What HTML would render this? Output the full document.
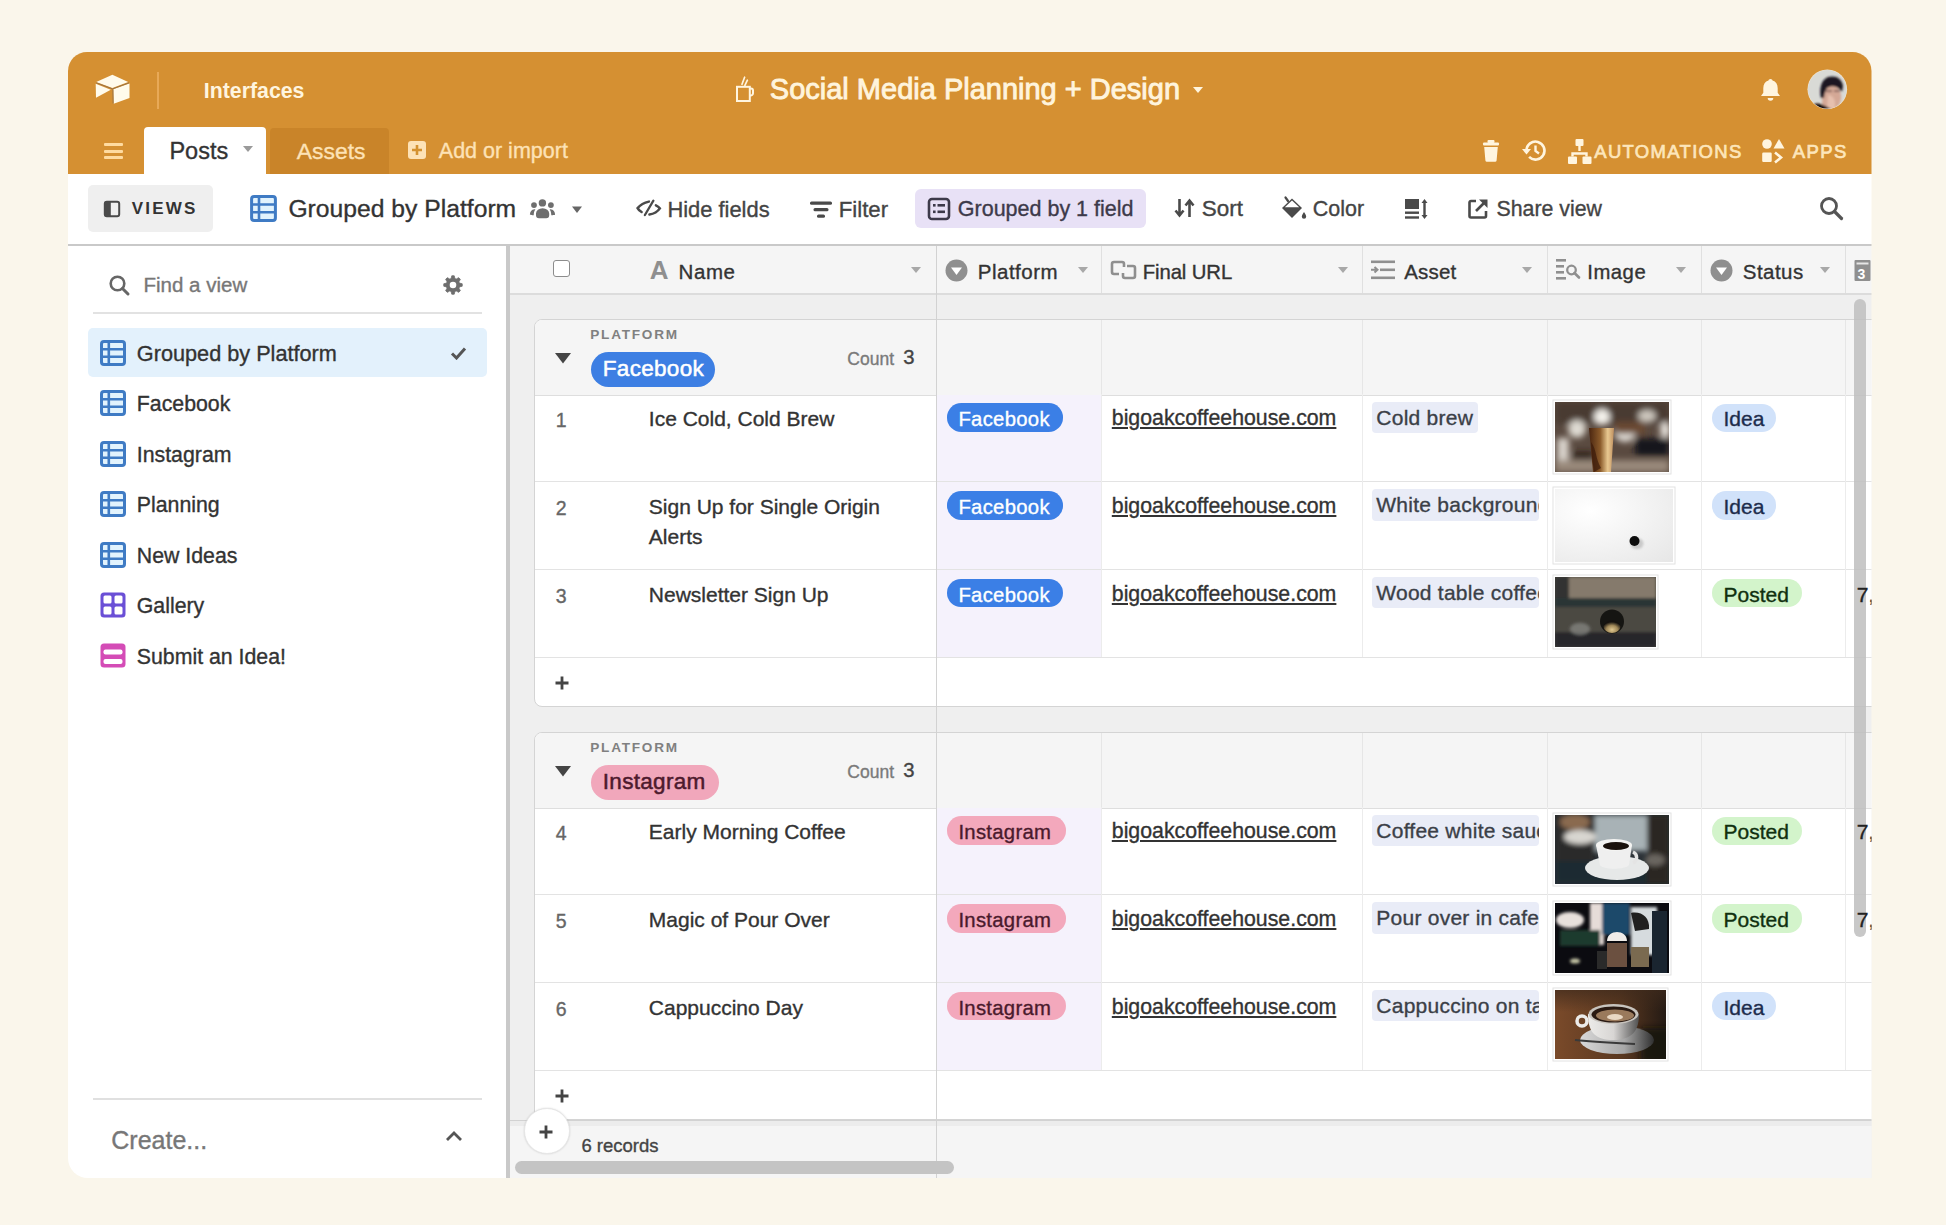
<!DOCTYPE html>
<html><head><meta charset="utf-8"><style>
html,body{margin:0;padding:0;width:1946px;height:1225px;overflow:hidden;background:#faf6eb;}
#win{position:absolute;left:0;top:0;width:1946px;height:1225px;clip-path:inset(52px 74.5px 47px 68px round 19px 19px 0 20px);}
.t{position:absolute;white-space:nowrap;line-height:1;font-family:"Liberation Sans",sans-serif;-webkit-text-stroke:0.35px currentColor;}
.r{position:absolute;display:block;}
</style></head><body><div id="win">
<div class="r" style="left:68.0px;top:52.0px;width:1806.0px;height:122.0px;background:#d59032;"></div>
<svg class="r" style="left:92.0px;top:72.0px;" width="40" height="34" viewBox="0 0 40 34">
      <polygon points="4.2,9.9 20.4,2.8 36.2,9.9 20.4,16" fill="#fffbec"/>
      <polygon points="3.7,11.8 18.8,17.8 4,25.7" fill="#fffbec"/>
      <polygon points="21.3,17.2 37.5,11.4 37.5,26 21.7,31.7" fill="#fffbec"/>
      <path d="M4.2 10.8 L20.5 16.9 L37 10.8 M20.9 17.2 L21.1 31.5" fill="none" stroke="#9c7444" stroke-width="1"/>
    </svg>
<div class="r" style="left:157.0px;top:72.0px;width:2.0px;height:37.0px;background:#e8a957;"></div>
<div class="t" style="left:203.8px;top:80.9px;font-size:21.3px;color:#fff5df;font-weight:bold;-webkit-text-stroke:0">Interfaces</div>
<svg class="r" style="left:734.0px;top:76.0px;" width="24" height="28" viewBox="0 0 24 28">
      <rect x="3" y="10.8" width="12.8" height="14.2" fill="none" stroke="#fff5df" stroke-width="2"/>
      <path d="M15.8 12.6 h1.2 a2 2 0 0 1 2 2 v2.6 a2.4 2.4 0 0 1 -2.4 2.4 h-0.8" fill="none" stroke="#fff5df" stroke-width="2"/>
      <path d="M8 8.3 L10.6 1.2 M10.9 9.4 L13.4 4.2" fill="none" stroke="#fff5df" stroke-width="1.7" stroke-linecap="round"/>
    </svg>
<div class="t" style="left:769.8px;top:75.2px;font-size:29px;color:#fff4dc;font-weight:normal;-webkit-text-stroke:0.9px currentColor">Social Media Planning + Design</div>
<svg class="r" style="left:1192.0px;top:86.0px;" width="12" height="8" viewBox="0 0 12 8"><polygon points="1,1 11,1 6,7" fill="#fff5df"/></svg>
<svg class="r" style="left:1758.0px;top:77.0px;" width="25" height="26" viewBox="0 0 25 26">
      <path d="M12.5 2 c1.2 0 2 .8 2 1.6 c3.5 1 5.2 3.8 5.2 7.6 v4.5 l2.3 3.3 h-19 l2.3 -3.3 v-4.5 c0 -3.8 1.7 -6.6 5.2 -7.6 c0 -.8 .8 -1.6 2 -1.6z" fill="#fff5df"/>
      <path d="M9.7 21 h5.6 a2.8 2.8 0 0 1 -5.6 0z" fill="#fff5df"/>
    </svg>
<svg class="r" style="left:1807.0px;top:69.0px;" width="41" height="41" viewBox="0 0 41 41">
      <defs><clipPath id="av"><circle cx="20.3" cy="20.3" r="19.3"/></clipPath>
      <filter id="avb" x="-20%" y="-20%" width="140%" height="140%"><feGaussianBlur stdDeviation="0.9"/></filter></defs>
      <circle cx="20.3" cy="20.3" r="19.8" fill="#f3e6cf"/>
      <g clip-path="url(#av)">
        <rect width="41" height="41" fill="#d9dad6"/>
        <g filter="url(#avb)">
        <path d="M20 16 C26 15 33 18 34 26 C35 34 30 40 24 41 L16 41 C14 34 15 22 20 16 Z" fill="#d4a896"/>
        <path d="M21 26 C24 26 27 28 28 33 L28 41 L20 41 Z" fill="#e6c0ae"/>
        <path d="M14 29 C12 20 14 11 21 8 C28 6 35 9 36 17 L35 23 C31 17 25 16 20 19 C18 22 17 26 17 29 Z" fill="#1a1520"/>
        <path d="M19 22 h6 M27 22 h6" stroke="#4a3030" stroke-width="1.2"/>
        <path d="M3 38 C8 33 13 34 18 37 C22 39 26 41 28 44 L3 44 Z" fill="#15110f"/>
        </g>
      </g>
    </svg>
<div class="r" style="left:104.0px;top:143.0px;width:19.0px;height:3.0px;background:#ffdba0;border-radius:1px"></div>
<div class="r" style="left:104.0px;top:149.5px;width:19.0px;height:3.0px;background:#ffdba0;border-radius:1px"></div>
<div class="r" style="left:104.0px;top:156.0px;width:19.0px;height:3.0px;background:#ffdba0;border-radius:1px"></div>
<div class="r" style="left:144.0px;top:127.0px;width:122.0px;height:48.0px;background:#fff;border-radius:4px 4px 0 0"></div>
<div class="t" style="left:169.4px;top:140.3px;font-size:23.5px;color:#333;font-weight:normal;">Posts</div>
<svg class="r" style="left:242.0px;top:145.0px;" width="12" height="9" viewBox="0 0 12 9"><polygon points="1,1 11,1 6,7" fill="#9a9a9a"/></svg>
<div class="r" style="left:270.0px;top:128.0px;width:119.0px;height:46.0px;background:#c98429;border-radius:4px 4px 0 0"></div>
<div class="t" style="left:296.8px;top:140.0px;font-size:22.9px;color:#fde2b6;font-weight:normal;">Assets</div>
<svg class="r" style="left:407.0px;top:140.0px;" width="20" height="20" viewBox="0 0 20 20">
      <rect x="1" y="1" width="18" height="18" rx="3" fill="#fde2b6"/>
      <path d="M10 5 v10 M5 10 h10" stroke="#d4912f" stroke-width="2.6"/>
    </svg>
<div class="t" style="left:438.8px;top:140.6px;font-size:21.5px;color:#fde2b6;font-weight:normal;">Add or import</div>
<svg class="r" style="left:1481.0px;top:139.0px;" width="20" height="24" viewBox="0 0 20 24">
      <rect x="2" y="3.5" width="16" height="3" rx="1" fill="#fff5df"/>
      <rect x="6.5" y="1" width="7" height="3" rx="1" fill="#fff5df"/>
      <path d="M3.2 8 h13.6 l-1.2 13.5 a1.5 1.5 0 0 1 -1.5 1.3 h-8.2 a1.5 1.5 0 0 1 -1.5 -1.3z" fill="#fff5df"/>
    </svg>
<svg class="r" style="left:1521.0px;top:138.0px;" width="27" height="25" viewBox="0 0 27 25">
      <path d="M5.5 12.5 a9 9 0 1 1 2.6 6.4" fill="none" stroke="#fff5df" stroke-width="2.6"/>
      <polygon points="1,11 10,11 5.5,16.5" fill="#fff5df"/>
      <path d="M14.5 7.5 v5.5 l3.5 2.5" fill="none" stroke="#fff5df" stroke-width="2.4"/>
    </svg>
<svg class="r" style="left:1567.0px;top:138.0px;" width="26" height="27" viewBox="0 0 26 27">
      <rect x="8.5" y="1" width="8" height="7" rx="1" fill="#fff5df"/>
      <rect x="1" y="18.5" width="9" height="7.5" rx="1" fill="#fff5df"/>
      <rect x="15.5" y="18.5" width="9" height="7.5" rx="1" fill="#fff5df"/>
      <path d="M12.5 8 v5 M5.5 18.5 v-3 h14 v3" fill="none" stroke="#fff5df" stroke-width="2.4"/>
    </svg>
<div class="t" style="left:1594.3px;top:142.6px;font-size:18.5px;color:#fde6bb;font-weight:normal;letter-spacing:1.3px;-webkit-text-stroke:0.7px currentColor">AUTOMATIONS</div>
<svg class="r" style="left:1761.0px;top:138.0px;" width="26" height="26" viewBox="0 0 26 26">
      <circle cx="6" cy="6" r="4.8" fill="#fff5df"/>
      <polygon points="18,1 23.5,10.5 12.5,10.5" fill="#fff5df"/>
      <rect x="1.2" y="14.5" width="9.5" height="9.5" rx="1.2" fill="#fff5df"/>
      <path d="M14 14.5 l6 5 l-6 5" fill="none" stroke="#fff5df" stroke-width="2.6"/>
    </svg>
<div class="t" style="left:1792.8px;top:142.6px;font-size:18.5px;color:#fde6bb;font-weight:normal;letter-spacing:1.4px;-webkit-text-stroke:0.7px currentColor">APPS</div>
<div class="r" style="left:68.0px;top:174.0px;width:1806.0px;height:70.0px;background:#fff;"></div>
<div class="r" style="left:68.0px;top:243.5px;width:1806.0px;height:2.5px;background:#c9c9c9;"></div>
<div class="r" style="left:88.0px;top:185.0px;width:125.0px;height:47.0px;background:#efefef;border-radius:5px"></div>
<svg class="r" style="left:103.0px;top:200.0px;" width="18" height="18" viewBox="0 0 18 18">
      <rect x="1.8" y="1.8" width="14.4" height="14.4" rx="2" fill="none" stroke="#4a4a4a" stroke-width="2"/>
      <rect x="1.8" y="1.8" width="6" height="14.4" fill="#4a4a4a"/>
    </svg>
<div class="t" style="left:131.8px;top:199.8px;font-size:17px;color:#333;font-weight:bold;letter-spacing:2.2px;-webkit-text-stroke:0">VIEWS</div>
<svg class="r" style="left:250.0px;top:195.0px;" width="27" height="27" viewBox="0 0 27 27">
      <rect x="1.6" y="1.6" width="23.8" height="23.8" rx="2.5" fill="#e2f3fd" stroke="#3f7bc4" stroke-width="3"/>
      <path d="M1.6 9.5 h23.8 M1.6 17.3 h23.8 M9 1.6 v23.8" stroke="#3f7bc4" stroke-width="2.6"/>
    </svg>
<div class="t" style="left:288.4px;top:197.1px;font-size:24.7px;color:#333;font-weight:normal;">Grouped by Platform</div>
<svg class="r" style="left:529.0px;top:198.0px;" width="28" height="22" viewBox="0 0 28 22">
      <g fill="#6e6e6e">
      <circle cx="13.4" cy="4.9" r="3.7"/>
      <circle cx="5" cy="7.1" r="2.9"/>
      <circle cx="21.9" cy="7.1" r="2.9"/>
      <path d="M7 15.5 a6.6 5.2 0 0 1 13.2 0 v1.8 a3 3 0 0 1 -3 3 h-7.2 a3 3 0 0 1 -3 -3z"/>
      <path d="M0.9 16.8 c0 -3 1.6 -5.3 4.6 -5.5 c0.3 0 0.6 0 0.9 .1 c-1.1 1.2 -1.6 3 -1.7 5.9 c-1.6 0 -3 -.2 -3.8 -.5z"/>
      <path d="M26.1 16.8 c0 -3 -1.6 -5.3 -4.6 -5.5 c-0.3 0 -0.6 0 -0.9 .1 c1.1 1.2 1.6 3 1.7 5.9 c1.6 0 3 -.2 3.8 -.5z"/>
      </g>
    </svg>
<svg class="r" style="left:571.0px;top:205.0px;" width="12" height="10" viewBox="0 0 12 10"><polygon points="1,1.5 11,1.5 6,8" fill="#666"/></svg>
<svg class="r" style="left:636.0px;top:198.0px;" width="26" height="20" viewBox="0 0 26 20">
      <path d="M12.9 3.6 C8.5 4.6 3.8 7.5 1.6 10.1 C2.3 11.6 4 13 5.6 14" fill="none" stroke="#4a4a4a" stroke-width="2.5" stroke-linecap="round"/>
      <path d="M17.4 2.7 L8.9 17" stroke="#4a4a4a" stroke-width="2.3" stroke-linecap="round"/>
      <path d="M19.9 7.3 C21.8 8.2 23.2 9.3 23.9 10.4 C21.8 13.4 17.6 15.9 13.4 16.6" fill="none" stroke="#4a4a4a" stroke-width="2.5" stroke-linecap="round"/>
    </svg>
<div class="t" style="left:667.4px;top:198.5px;font-size:21.9px;color:#444;font-weight:normal;">Hide fields</div>
<svg class="r" style="left:809.0px;top:200.0px;" width="24" height="20" viewBox="0 0 24 20">
      <rect x="1" y="1.5" width="22" height="3.2" rx="1.5" fill="#4a4a4a"/>
      <rect x="4.5" y="8" width="15" height="3.2" rx="1.5" fill="#4a4a4a"/>
      <rect x="8" y="14.5" width="8" height="3.2" rx="1.5" fill="#4a4a4a"/>
    </svg>
<div class="t" style="left:838.8px;top:198.5px;font-size:22.2px;color:#444;font-weight:normal;">Filter</div>
<div class="r" style="left:914.5px;top:189.0px;width:231.5px;height:39.0px;background:#e8e1f6;border-radius:6px"></div>
<svg class="r" style="left:927.0px;top:196.5px;" width="24" height="24" viewBox="0 0 24 24">
      <rect x="2" y="2" width="20" height="20" rx="3" fill="none" stroke="#3d3a4a" stroke-width="2.6"/>
      <rect x="6" y="7" width="2.6" height="2.6" fill="#3d3a4a"/>
      <rect x="6" y="13.5" width="2.6" height="2.6" fill="#3d3a4a"/>
      <rect x="10.5" y="7" width="7.5" height="2.6" fill="#3d3a4a"/>
      <rect x="10.5" y="13.5" width="7.5" height="2.6" fill="#3d3a4a"/>
    </svg>
<div class="t" style="left:957.8px;top:198.6px;font-size:21.5px;color:#3d3a4a;font-weight:normal;">Grouped by 1 field</div>
<svg class="r" style="left:1174.0px;top:197.0px;" width="22" height="22" viewBox="0 0 22 22">
      <path d="M5.5 2 v16 M1.5 13.5 l4 5 l4 -5" fill="none" stroke="#4a4a4a" stroke-width="2.6"/>
      <path d="M15.5 20 v-16 M11.5 8.5 l4 -5 l4 5" fill="none" stroke="#4a4a4a" stroke-width="2.6"/>
    </svg>
<div class="t" style="left:1201.8px;top:198.4px;font-size:22.5px;color:#444;font-weight:normal;">Sort</div>
<svg class="r" style="left:1280.0px;top:195.0px;" width="28" height="26" viewBox="0 0 28 26">
      <path d="M2 13 L12 3.5 L22 13 L12 23 z" fill="#4a4a4a"/>
      <path d="M4.8 12.2 L12 5.5 L19.2 12.2 z" fill="#fff"/>
      <path d="M8 6 L5.5 2.5" stroke="#4a4a4a" stroke-width="2.2" stroke-linecap="round"/>
      <path d="M24 17 c-1.5 2.3 -2.2 3.6 -2.2 4.5 a2.2 2.2 0 0 0 4.4 0 c0 -.9 -.7 -2.2 -2.2 -4.5z" fill="#4a4a4a"/>
    </svg>
<div class="t" style="left:1312.8px;top:198.6px;font-size:21.5px;color:#444;font-weight:normal;">Color</div>
<svg class="r" style="left:1404.0px;top:198.0px;" width="25" height="22" viewBox="0 0 25 22">
      <rect x="1" y="1" width="14" height="10" fill="#4a4a4a"/>
      <rect x="1" y="13.5" width="14" height="2.4" fill="#4a4a4a"/>
      <rect x="1" y="18.3" width="14" height="2.4" fill="#4a4a4a"/>
      <path d="M20.5 3 v16" stroke="#4a4a4a" stroke-width="2.4"/>
      <path d="M17.5 5 l3 -4 l3 4 z M17.5 17 l3 4 l3 -4 z" fill="#4a4a4a"/>
    </svg>
<svg class="r" style="left:1468.0px;top:198.0px;" width="22" height="21" viewBox="0 0 22 21">
      <path d="M8 3 H3 a1.5 1.5 0 0 0 -1.5 1.5 v13.5 a1.5 1.5 0 0 0 1.5 1.5 h13.5 a1.5 1.5 0 0 0 1.5 -1.5 v-5" fill="none" stroke="#4a4a4a" stroke-width="2.6"/>
      <path d="M8 13 L17 4" stroke="#4a4a4a" stroke-width="2.6"/>
      <path d="M11 1.5 h8.5 v8.5 z" fill="#4a4a4a"/>
    </svg>
<div class="t" style="left:1496.5px;top:198.6px;font-size:21.3px;color:#444;font-weight:normal;">Share view</div>
<svg class="r" style="left:1819.0px;top:196.0px;" width="26" height="26" viewBox="0 0 26 26">
      <circle cx="10" cy="10" r="7.5" fill="none" stroke="#555" stroke-width="2.8"/>
      <path d="M15.5 15.5 L22.5 22.5" stroke="#555" stroke-width="3.2" stroke-linecap="round"/>
    </svg>
<div class="r" style="left:68.0px;top:246.0px;width:438.0px;height:932.0px;background:#fff;"></div>
<div class="r" style="left:506.0px;top:246.0px;width:4.0px;height:932.0px;background:#c9c9c9;"></div>
<svg class="r" style="left:108.0px;top:274.0px;" width="24" height="24" viewBox="0 0 24 24">
      <circle cx="9.5" cy="9.5" r="6.8" fill="none" stroke="#666" stroke-width="2.6"/>
      <path d="M14.5 14.5 L20 20" stroke="#666" stroke-width="3" stroke-linecap="round"/>
    </svg>
<div class="t" style="left:143.5px;top:275.3px;font-size:20.5px;color:#777;font-weight:normal;">Find a view</div>
<svg class="r" style="left:442.0px;top:274.0px;" width="22" height="22" viewBox="0 0 22 22">
      <polygon points="9.05,4.69 9.79,1.78 12.21,1.78 12.95,4.69 14.08,5.16 16.67,3.63 18.37,5.33 16.84,7.92 17.31,9.05 20.22,9.79 20.22,12.21 17.31,12.95 16.84,14.08 18.37,16.67 16.67,18.37 14.08,16.84 12.95,17.31 12.21,20.22 9.79,20.22 9.05,17.31 7.92,16.84 5.33,18.37 3.63,16.67 5.16,14.08 4.69,12.95 1.78,12.21 1.78,9.79 4.69,9.05 5.16,7.92 3.63,5.33 5.33,3.63 7.92,5.16" fill="#6e6e6e" stroke="#6e6e6e" stroke-width="0.8" stroke-linejoin="round"/>
      <circle cx="11" cy="11" r="6.8" fill="#6e6e6e"/>
      <circle cx="11" cy="11" r="3.3" fill="#fff"/>
    </svg>
<div class="r" style="left:93.0px;top:312.0px;width:389.0px;height:2.0px;background:#e2e2e2;"></div>
<div class="r" style="left:88.0px;top:328.0px;width:399.0px;height:48.5px;background:#e3f1fc;border-radius:5px"></div>
<svg class="r" style="left:99.5px;top:339.5px;" width="26" height="26" viewBox="0 0 26 26">
      <rect x="1.5" y="1.5" width="23" height="23" rx="2.5" fill="#e2f3fd" stroke="#3f7bc4" stroke-width="3"/>
      <path d="M1.5 9.3 h23 M1.5 16.7 h23 M8.8 1.5 v23" stroke="#3f7bc4" stroke-width="2.6"/>
    </svg>
<div class="t" style="left:136.8px;top:342.9px;font-size:21.7px;color:#333;font-weight:normal;">Grouped by Platform</div>
<svg class="r" style="left:99.5px;top:390.0px;" width="26" height="26" viewBox="0 0 26 26">
      <rect x="1.5" y="1.5" width="23" height="23" rx="2.5" fill="#e2f3fd" stroke="#3f7bc4" stroke-width="3"/>
      <path d="M1.5 9.3 h23 M1.5 16.7 h23 M8.8 1.5 v23" stroke="#3f7bc4" stroke-width="2.6"/>
    </svg>
<div class="t" style="left:136.8px;top:394.3px;font-size:21.3px;color:#333;font-weight:normal;">Facebook</div>
<svg class="r" style="left:99.5px;top:440.5px;" width="26" height="26" viewBox="0 0 26 26">
      <rect x="1.5" y="1.5" width="23" height="23" rx="2.5" fill="#e2f3fd" stroke="#3f7bc4" stroke-width="3"/>
      <path d="M1.5 9.3 h23 M1.5 16.7 h23 M8.8 1.5 v23" stroke="#3f7bc4" stroke-width="2.6"/>
    </svg>
<div class="t" style="left:136.8px;top:444.8px;font-size:21.3px;color:#333;font-weight:normal;">Instagram</div>
<svg class="r" style="left:99.5px;top:491.0px;" width="26" height="26" viewBox="0 0 26 26">
      <rect x="1.5" y="1.5" width="23" height="23" rx="2.5" fill="#e2f3fd" stroke="#3f7bc4" stroke-width="3"/>
      <path d="M1.5 9.3 h23 M1.5 16.7 h23 M8.8 1.5 v23" stroke="#3f7bc4" stroke-width="2.6"/>
    </svg>
<div class="t" style="left:136.8px;top:495.3px;font-size:21.3px;color:#333;font-weight:normal;">Planning</div>
<svg class="r" style="left:99.5px;top:541.5px;" width="26" height="26" viewBox="0 0 26 26">
      <rect x="1.5" y="1.5" width="23" height="23" rx="2.5" fill="#e2f3fd" stroke="#3f7bc4" stroke-width="3"/>
      <path d="M1.5 9.3 h23 M1.5 16.7 h23 M8.8 1.5 v23" stroke="#3f7bc4" stroke-width="2.6"/>
    </svg>
<div class="t" style="left:136.8px;top:545.8px;font-size:21.3px;color:#333;font-weight:normal;">New Ideas</div>
<svg class="r" style="left:99.5px;top:592.0px;" width="26" height="26" viewBox="0 0 26 26">
              <rect x="0.5" y="0.5" width="25" height="25" rx="3.5" fill="#6a4fd6"/>
              <rect x="3.5" y="3.5" width="8" height="8" rx="1.5" fill="#fff"/>
              <rect x="14.5" y="3.5" width="8" height="8" rx="1.5" fill="#fff"/>
              <rect x="3.5" y="14.5" width="8" height="8" rx="1.5" fill="#fff"/>
              <rect x="14.5" y="14.5" width="8" height="8" rx="1.5" fill="#fff"/>
            </svg>
<div class="t" style="left:136.8px;top:596.3px;font-size:21.3px;color:#333;font-weight:normal;">Gallery</div>
<svg class="r" style="left:99.5px;top:642.5px;" width="26" height="26" viewBox="0 0 26 26">
              <rect x="0.5" y="0.5" width="25" height="24" rx="3.5" fill="#d44cb6"/>
              <rect x="3.5" y="6.5" width="19" height="5" rx="2" fill="#fff"/>
              <rect x="3.5" y="16" width="19" height="5" rx="2" fill="#fff"/>
            </svg>
<div class="t" style="left:136.8px;top:646.8px;font-size:21.3px;color:#333;font-weight:normal;">Submit an Idea!</div>
<svg class="r" style="left:450.0px;top:346.0px;" width="17" height="14" viewBox="0 0 17 14"><path d="M2 7.5 L6.5 12 L15 2.5" fill="none" stroke="#555" stroke-width="3"/></svg>
<div class="r" style="left:93.0px;top:1097.5px;width:389.0px;height:2.0px;background:#e0e0e0;"></div>
<div class="t" style="left:111.3px;top:1127.5px;font-size:25px;color:#777;font-weight:normal;">Create...</div>
<svg class="r" style="left:444.0px;top:1129.0px;" width="20" height="15" viewBox="0 0 20 15"><path d="M3 11 L10 4 L17 11" fill="none" stroke="#555" stroke-width="2.8"/></svg>
<div class="r" style="left:510.0px;top:295.0px;width:1364.0px;height:883.0px;background:#efefef;"></div>
<div class="r" style="left:510.0px;top:246.0px;width:1364.0px;height:47.0px;background:#f5f5f5;"></div>
<div class="r" style="left:510.0px;top:293.0px;width:1364.0px;height:2.0px;background:#dcdcdc;"></div>
<div class="r" style="left:553.0px;top:260.0px;width:16.5px;height:16.5px;background:#fff;border:1.5px solid #8c8c8c;border-radius:3px;box-sizing:border-box"></div>
<div class="t" style="left:649.8px;top:256.9px;font-size:26px;color:#8f8f8f;font-weight:bold;-webkit-text-stroke:0">A</div>
<div class="t" style="left:678.5px;top:261.5px;font-size:20.5px;color:#333;font-weight:normal;letter-spacing:0.6px">Name</div>
<svg class="r" style="left:910.0px;top:266.0px;" width="12" height="8" viewBox="0 0 12 8"><polygon points="1,1 11,1 6,7" fill="#a8a8a8"/></svg>
<div class="r" style="left:936.0px;top:246.0px;width:1.0px;height:47.0px;background:#e0e0e0;"></div>
<div class="r" style="left:1101.0px;top:246.0px;width:1.0px;height:47.0px;background:#e0e0e0;"></div>
<div class="r" style="left:1362.0px;top:246.0px;width:1.0px;height:47.0px;background:#e0e0e0;"></div>
<div class="r" style="left:1547.0px;top:246.0px;width:1.0px;height:47.0px;background:#e0e0e0;"></div>
<div class="r" style="left:1701.0px;top:246.0px;width:1.0px;height:47.0px;background:#e0e0e0;"></div>
<div class="r" style="left:1845.0px;top:246.0px;width:1.0px;height:47.0px;background:#e0e0e0;"></div>
<svg class="r" style="left:945.0px;top:259.0px;" width="23" height="23" viewBox="0 0 23 23"><circle cx="11.5" cy="11.5" r="11" fill="#8f8f8f"/><polygon points="6,8.5 17,8.5 11.5,16" fill="#fff"/></svg>
<div class="t" style="left:977.8px;top:261.5px;font-size:20.5px;color:#333;font-weight:normal;letter-spacing:0.5px">Platform</div>
<svg class="r" style="left:1076.5px;top:266.0px;" width="12" height="8" viewBox="0 0 12 8"><polygon points="1,1 11,1 6,7" fill="#a8a8a8"/></svg>
<svg class="r" style="left:1110.0px;top:259.0px;" width="27" height="22" viewBox="0 0 27 22">
      <path d="M9 15 H4 a2 2 0 0 1 -2 -2 V5 a2 2 0 0 1 2 -2 h8 a2 2 0 0 1 2 2 v3" fill="none" stroke="#8f8f8f" stroke-width="2.6"/>
      <path d="M17 7 H23 a2 2 0 0 1 2 2 v8 a2 2 0 0 1 -2 2 h-8 a2 2 0 0 1 -2 -2 v-3" fill="none" stroke="#8f8f8f" stroke-width="2.6"/>
    </svg>
<div class="t" style="left:1142.8px;top:261.5px;font-size:20.3px;color:#333;font-weight:normal;letter-spacing:-0.1px">Final URL</div>
<svg class="r" style="left:1337.0px;top:266.0px;" width="12" height="8" viewBox="0 0 12 8"><polygon points="1,1 11,1 6,7" fill="#a8a8a8"/></svg>
<svg class="r" style="left:1370.0px;top:259.0px;" width="27" height="22" viewBox="0 0 27 22">
      <rect x="1" y="1.5" width="24" height="2.6" fill="#8f8f8f"/>
      <rect x="10" y="9.5" width="15" height="2.6" fill="#8f8f8f"/>
      <rect x="1" y="17.5" width="24" height="2.6" fill="#8f8f8f"/>
      <path d="M1 10.8 h6 M4.5 8 l3 2.8 l-3 2.8" fill="none" stroke="#8f8f8f" stroke-width="2"/>
    </svg>
<div class="t" style="left:1404.3px;top:261.5px;font-size:20.5px;color:#333;font-weight:normal;letter-spacing:0.15px">Asset</div>
<svg class="r" style="left:1521.0px;top:266.0px;" width="12" height="8" viewBox="0 0 12 8"><polygon points="1,1 11,1 6,7" fill="#a8a8a8"/></svg>
<svg class="r" style="left:1555.0px;top:258.0px;" width="26" height="24" viewBox="0 0 26 24">
      <rect x="1" y="1" width="10" height="2.6" fill="#8f8f8f"/>
      <rect x="1" y="7" width="8" height="2.6" fill="#8f8f8f"/>
      <rect x="1" y="13" width="8" height="2.6" fill="#8f8f8f"/>
      <rect x="1" y="19" width="10" height="2.6" fill="#8f8f8f"/>
      <circle cx="16.5" cy="12" r="4.3" fill="none" stroke="#8f8f8f" stroke-width="2.3"/>
      <path d="M19.5 15 L24 19.5" stroke="#8f8f8f" stroke-width="2.6" stroke-linecap="round"/>
    </svg>
<div class="t" style="left:1587.3px;top:261.5px;font-size:20.3px;color:#333;font-weight:normal;letter-spacing:0.5px">Image</div>
<svg class="r" style="left:1674.5px;top:266.0px;" width="12" height="8" viewBox="0 0 12 8"><polygon points="1,1 11,1 6,7" fill="#a8a8a8"/></svg>
<svg class="r" style="left:1710.0px;top:259.0px;" width="23" height="23" viewBox="0 0 23 23"><circle cx="11.5" cy="11.5" r="11" fill="#8f8f8f"/><polygon points="6,8.5 17,8.5 11.5,16" fill="#fff"/></svg>
<div class="t" style="left:1742.8px;top:261.5px;font-size:20.5px;color:#333;font-weight:normal;letter-spacing:0.45px">Status</div>
<svg class="r" style="left:1819.0px;top:266.0px;" width="12" height="8" viewBox="0 0 12 8"><polygon points="1,1 11,1 6,7" fill="#a8a8a8"/></svg>
<svg class="r" style="left:1853.0px;top:258.0px;" width="20" height="25" viewBox="0 0 20 25">
      <rect x="1.5" y="2" width="16" height="21" rx="1" fill="#8f8f8f"/>
      <rect x="3.5" y="4.5" width="12" height="2" fill="#e6e6e6"/>
      <text x="8.5" y="20.5" font-family="Liberation Sans" font-size="14" font-weight="bold" fill="#fff" text-anchor="middle">3</text>
    </svg>
<div class="r" style="left:534px;top:319px;width:1400px;height:388px;border:1px solid #d4d4d4;border-radius:8px;background:#fff;box-sizing:border-box;overflow:hidden"><div class="r" style="left:0;top:0;width:1400px;height:75px;background:#f5f5f5;border-bottom:1px solid #dedede"></div></div>
<div class="r" style="left:1101.0px;top:320.0px;width:1.0px;height:74.0px;background:#e6e6e6;"></div>
<div class="r" style="left:1362.0px;top:320.0px;width:1.0px;height:74.0px;background:#e6e6e6;"></div>
<div class="r" style="left:1547.0px;top:320.0px;width:1.0px;height:74.0px;background:#e6e6e6;"></div>
<div class="r" style="left:1701.0px;top:320.0px;width:1.0px;height:74.0px;background:#e6e6e6;"></div>
<div class="r" style="left:1845.0px;top:320.0px;width:1.0px;height:74.0px;background:#e6e6e6;"></div>
<div class="t" style="left:590.3px;top:328.0px;font-size:13.6px;color:#808080;font-weight:bold;letter-spacing:1.75px;-webkit-text-stroke:0">PLATFORM</div>
<svg class="r" style="left:554.0px;top:352.0px;" width="18" height="12" viewBox="0 0 18 12"><polygon points="1,1 17,1 9,11.5" fill="#444"/></svg>
<div class="r" style="left:590.5px;top:352.0px;width:124.5px;height:35.0px;background:#3d7fe3;border-radius:17.5px"></div>
<div class="t" style="left:602.8px;top:358.4px;font-size:22.5px;color:#fff;font-weight:normal;letter-spacing:0.3px;-webkit-text-stroke:0.5px currentColor">Facebook</div>
<div class="t" style="left:847.3px;top:350.7px;font-size:17.5px;color:#7a7a7a;font-weight:normal;">Count</div>
<div class="t" style="left:903.3px;top:347.3px;font-size:20.3px;color:#444;font-weight:normal;">3</div>
<div class="r" style="left:937.0px;top:394.5px;width:164.0px;height:87.2px;background:#f5f2fc;"></div>
<div class="r" style="left:535.0px;top:481.2px;width:1339.0px;height:1.0px;background:#e3e3e3;"></div>
<div class="t" style="left:555.8px;top:411.2px;font-size:19.5px;color:#666;font-weight:normal;">1</div>
<div class="t" style="left:648.8px;top:408.2px;font-size:21px;color:#333;font-weight:normal;">Ice Cold, Cold Brew</div>
<div class="r" style="left:947.0px;top:403.4px;width:116.0px;height:28.6px;background:#3b7fe6;border-radius:14.3px"></div>
<div class="t" style="left:958.4px;top:409.2px;font-size:20.3px;color:#fff;font-weight:normal;letter-spacing:0.3px">Facebook</div>
<div class="t" style="left:1111.8px;top:408.2px;font-size:21.3px;color:#333;font-weight:normal;text-decoration:underline;text-underline-offset:2px;text-decoration-thickness:1.5px">bigoakcoffeehouse.com</div>
<div class="r" style="left:1371.5px;top:401.7px;height:31.3px;background:#e9ecf7;border-radius:4px;overflow:hidden;width:106px"><div class="t" style="left:4.8px;top:5.1px;font-size:21px;color:#3b3f47;letter-spacing:0.25px">Cold brew</div></div>
<svg class="r" style="left:1555.0px;top:402.0px;box-shadow:0 0 0 1.5px #fff, 0 0 0 2.5px #e2e2e2" width="114" height="70" viewBox="0 0 114 70">
        <defs><filter id="b1" x="-30%" y="-30%" width="160%" height="160%"><feGaussianBlur stdDeviation="3"/></filter>
        <linearGradient id="g1" x1="0" x2="1"><stop offset="0" stop-color="#4a2510"/><stop offset=".45" stop-color="#8a5a2a"/><stop offset=".75" stop-color="#e8c890"/><stop offset="1" stop-color="#c09060"/></linearGradient></defs>
        <rect width="114" height="70" fill="#5a4a40"/>
        <g filter="url(#b1)">
          <rect x="0" y="0" width="114" height="22" fill="#4a3a30"/>
          <circle cx="47" cy="15" r="8" fill="#f4f2ec"/>
          <ellipse cx="22" cy="27" rx="9" ry="9" fill="#dedad2"/>
          <ellipse cx="70" cy="30" rx="11" ry="10" fill="#e4e0da"/>
          <ellipse cx="92" cy="14" rx="9" ry="6" fill="#cfc9c0"/>
          <ellipse cx="110" cy="28" rx="5" ry="8" fill="#e8e4de"/>
          <rect x="80" y="36" width="34" height="18" fill="#15131a"/>
          <rect x="60" y="20" width="30" height="12" fill="#6a4a30"/>
          <rect x="2" y="36" width="12" height="26" fill="#d8d2ca"/>
          <rect x="18" y="50" width="20" height="8" fill="#2a1e18"/>
          <rect x="0" y="58" width="114" height="12" fill="#9a8a7c"/>
        </g>
        <path d="M34 26 L59 26 L56 70 L38 70 Z" fill="url(#g1)"/>
        <path d="M36 40 C42 48 40 56 46 66 L39 70 L37 55 Z" fill="#3a1a0a" opacity=".7"/>
        </svg>
<div class="r" style="left:1712.0px;top:403.7px;width:64.0px;height:28.3px;background:#d1e2fa;border-radius:14px"></div>
<div class="t" style="left:1723.5px;top:408.3px;font-size:21px;color:#1d2c4c;font-weight:normal;">Idea</div>
<div class="r" style="left:937.0px;top:482.2px;width:164.0px;height:87.2px;background:#f5f2fc;"></div>
<div class="r" style="left:535.0px;top:568.8px;width:1339.0px;height:1.0px;background:#e3e3e3;"></div>
<div class="t" style="left:555.8px;top:498.9px;font-size:19.5px;color:#666;font-weight:normal;">2</div>
<div class="t" style="left:648.8px;top:495.8px;font-size:21px;color:#333;font-weight:normal;">Sign Up for Single Origin</div>
<div class="t" style="left:648.8px;top:526.3px;font-size:21px;color:#333;font-weight:normal;">Alerts</div>
<div class="r" style="left:947.0px;top:491.1px;width:116.0px;height:28.6px;background:#3b7fe6;border-radius:14.3px"></div>
<div class="t" style="left:958.4px;top:496.9px;font-size:20.3px;color:#fff;font-weight:normal;letter-spacing:0.3px">Facebook</div>
<div class="t" style="left:1111.8px;top:495.9px;font-size:21.3px;color:#333;font-weight:normal;text-decoration:underline;text-underline-offset:2px;text-decoration-thickness:1.5px">bigoakcoffeehouse.com</div>
<div class="r" style="left:1371.5px;top:489.4px;height:31.3px;background:#e9ecf7;border-radius:4px;overflow:hidden;width:167.5px"><div class="t" style="left:4.8px;top:5.1px;font-size:21px;color:#3b3f47;letter-spacing:0.25px">White background</div></div>
<svg class="r" style="left:1555.0px;top:488.7px;box-shadow:0 0 0 1.5px #fff, 0 0 0 2.5px #e2e2e2" width="118" height="73" viewBox="0 0 118 73">
        <defs><radialGradient id="g2" cx=".3" cy=".3" r="1"><stop offset="0" stop-color="#ffffff"/><stop offset="1" stop-color="#e6e6e6"/></radialGradient>
        <filter id="b2" x="-50%" y="-50%" width="200%" height="200%"><feGaussianBlur stdDeviation="1.2"/></filter></defs>
        <rect width="118" height="73" fill="url(#g2)"/>
        <ellipse cx="82" cy="54.5" rx="6.5" ry="5.5" fill="#b0b0b0" opacity=".6" filter="url(#b2)"/>
        <circle cx="79.5" cy="52" r="5" fill="#0d0d0d"/>
        </svg>
<div class="r" style="left:1712.0px;top:491.4px;width:64.0px;height:28.3px;background:#d1e2fa;border-radius:14px"></div>
<div class="t" style="left:1723.5px;top:495.9px;font-size:21px;color:#1d2c4c;font-weight:normal;">Idea</div>
<div class="r" style="left:937.0px;top:569.8px;width:164.0px;height:87.2px;background:#f5f2fc;"></div>
<div class="r" style="left:535.0px;top:656.5px;width:1339.0px;height:1.0px;background:#e3e3e3;"></div>
<div class="t" style="left:555.8px;top:586.5px;font-size:19.5px;color:#666;font-weight:normal;">3</div>
<div class="t" style="left:648.8px;top:583.5px;font-size:21px;color:#333;font-weight:normal;">Newsletter Sign Up</div>
<div class="r" style="left:947.0px;top:578.7px;width:116.0px;height:28.6px;background:#3b7fe6;border-radius:14.3px"></div>
<div class="t" style="left:958.4px;top:584.5px;font-size:20.3px;color:#fff;font-weight:normal;letter-spacing:0.3px">Facebook</div>
<div class="t" style="left:1111.8px;top:583.6px;font-size:21.3px;color:#333;font-weight:normal;text-decoration:underline;text-underline-offset:2px;text-decoration-thickness:1.5px">bigoakcoffeehouse.com</div>
<div class="r" style="left:1371.5px;top:577.0px;height:31.3px;background:#e9ecf7;border-radius:4px;overflow:hidden;width:167.5px"><div class="t" style="left:4.8px;top:5.1px;font-size:21px;color:#3b3f47;letter-spacing:0.25px">Wood table coffee</div></div>
<svg class="r" style="left:1555.0px;top:577.3px;box-shadow:0 0 0 1.5px #fff, 0 0 0 2.5px #e2e2e2" width="101" height="70" viewBox="0 0 101 70">
        <defs><filter id="b3" x="-20%" y="-20%" width="140%" height="140%"><feGaussianBlur stdDeviation="1.5"/></filter>
        <radialGradient id="c3" cx=".5" cy=".75" r=".6"><stop offset="0" stop-color="#e0c890"/><stop offset=".55" stop-color="#a08858"/><stop offset="1" stop-color="#15120f"/></radialGradient></defs>
        <rect width="101" height="70" fill="#45433c"/>
        <g filter="url(#b3)">
          <rect y="0" width="101" height="22" fill="#857a6c"/>
          <rect x="0" y="0" width="14" height="70" fill="#303330"/>
          <rect y="21" width="101" height="9" fill="#2a3535"/>
          <rect y="30" width="101" height="25" fill="#4c4a42"/>
          <rect y="55" width="101" height="15" fill="#25282a"/>
          <ellipse cx="25" cy="52" rx="10" ry="6" fill="#8a8a88" opacity=".7"/>
        </g>
        <circle cx="57" cy="44.5" r="12" fill="#151512"/>
        <ellipse cx="57" cy="49.5" rx="8.5" ry="6.5" fill="url(#c3)"/>
        </svg>
<div class="r" style="left:1712.0px;top:579.0px;width:90.0px;height:28.3px;background:#d3f4cb;border-radius:14px"></div>
<div class="t" style="left:1723.5px;top:583.6px;font-size:21px;color:#10300f;font-weight:normal;">Posted</div>
<div class="t" style="left:1856.8px;top:583.6px;font-size:21px;color:#222;font-weight:normal;z-index:2">7,</div>
<div class="r" style="left:1101.0px;top:394.0px;width:1.0px;height:263.0px;background:#ececec;"></div>
<div class="r" style="left:1362.0px;top:394.0px;width:1.0px;height:263.0px;background:#ececec;"></div>
<div class="r" style="left:1547.0px;top:394.0px;width:1.0px;height:263.0px;background:#ececec;"></div>
<div class="r" style="left:1701.0px;top:394.0px;width:1.0px;height:263.0px;background:#ececec;"></div>
<div class="r" style="left:1845.0px;top:394.0px;width:1.0px;height:263.0px;background:#ececec;"></div>
<svg class="r" style="left:554.0px;top:675.0px;" width="16" height="16" viewBox="0 0 16 16"><path d="M8 1.5 v13 M1.5 8 h13" stroke="#444" stroke-width="2.8"/></svg>
<div class="r" style="left:534px;top:732px;width:1400px;height:388px;border:1px solid #d4d4d4;border-radius:8px;background:#fff;box-sizing:border-box;overflow:hidden"><div class="r" style="left:0;top:0;width:1400px;height:75px;background:#f5f5f5;border-bottom:1px solid #dedede"></div></div>
<div class="r" style="left:1101.0px;top:733.0px;width:1.0px;height:74.0px;background:#e6e6e6;"></div>
<div class="r" style="left:1362.0px;top:733.0px;width:1.0px;height:74.0px;background:#e6e6e6;"></div>
<div class="r" style="left:1547.0px;top:733.0px;width:1.0px;height:74.0px;background:#e6e6e6;"></div>
<div class="r" style="left:1701.0px;top:733.0px;width:1.0px;height:74.0px;background:#e6e6e6;"></div>
<div class="r" style="left:1845.0px;top:733.0px;width:1.0px;height:74.0px;background:#e6e6e6;"></div>
<div class="t" style="left:590.3px;top:741.0px;font-size:13.6px;color:#808080;font-weight:bold;letter-spacing:1.75px;-webkit-text-stroke:0">PLATFORM</div>
<svg class="r" style="left:554.0px;top:765.0px;" width="18" height="12" viewBox="0 0 18 12"><polygon points="1,1 17,1 9,11.5" fill="#444"/></svg>
<div class="r" style="left:590.5px;top:765.0px;width:128.0px;height:35.0px;background:#f1a7bb;border-radius:17.5px"></div>
<div class="t" style="left:602.8px;top:771.4px;font-size:22.5px;color:#4d1a2d;font-weight:normal;letter-spacing:0.3px;-webkit-text-stroke:0.5px currentColor">Instagram</div>
<div class="t" style="left:847.3px;top:763.7px;font-size:17.5px;color:#7a7a7a;font-weight:normal;">Count</div>
<div class="t" style="left:903.3px;top:760.3px;font-size:20.3px;color:#444;font-weight:normal;">3</div>
<div class="r" style="left:937.0px;top:807.5px;width:164.0px;height:87.2px;background:#f5f2fc;"></div>
<div class="r" style="left:535.0px;top:894.2px;width:1339.0px;height:1.0px;background:#e3e3e3;"></div>
<div class="t" style="left:555.8px;top:824.2px;font-size:19.5px;color:#666;font-weight:normal;">4</div>
<div class="t" style="left:648.8px;top:821.2px;font-size:21px;color:#333;font-weight:normal;">Early Morning Coffee</div>
<div class="r" style="left:947.0px;top:816.4px;width:118.5px;height:28.6px;background:#f3a8bc;border-radius:14.3px"></div>
<div class="t" style="left:958.4px;top:822.2px;font-size:20.3px;color:#4a1a2c;font-weight:normal;letter-spacing:0.3px">Instagram</div>
<div class="t" style="left:1111.8px;top:821.2px;font-size:21.3px;color:#333;font-weight:normal;text-decoration:underline;text-underline-offset:2px;text-decoration-thickness:1.5px">bigoakcoffeehouse.com</div>
<div class="r" style="left:1371.5px;top:814.7px;height:31.3px;background:#e9ecf7;border-radius:4px;overflow:hidden;width:167.5px"><div class="t" style="left:4.8px;top:5.1px;font-size:21px;color:#3b3f47;letter-spacing:0.25px">Coffee white saucer</div></div>
<svg class="r" style="left:1555.0px;top:815.0px;box-shadow:0 0 0 1.5px #fff, 0 0 0 2.5px #e2e2e2" width="114" height="69" viewBox="0 0 114 69">
        <defs><filter id="b4" x="-20%" y="-20%" width="140%" height="140%"><feGaussianBlur stdDeviation="2.5"/></filter></defs>
        <rect width="114" height="69" fill="#2a3035"/>
        <g filter="url(#b4)">
          <rect x="38" y="0" width="58" height="36" fill="#a8b2b6"/>
          <rect x="0" y="0" width="40" height="60" fill="#2a2a2a"/>
          <ellipse cx="20" cy="7" rx="15" ry="8" fill="#8a6a50"/>
          <ellipse cx="25" cy="22" rx="16" ry="7" fill="#d8d6d0"/>
          <rect x="0" y="46" width="114" height="23" fill="#1d2a33"/>
          <rect x="92" y="0" width="22" height="69" fill="#2a2624"/>
          <ellipse cx="100" cy="45" rx="10" ry="6" fill="#6a6660"/>
        </g>
        <ellipse cx="62" cy="53" rx="32" ry="12" fill="#e6e8e8"/>
        <path d="M78 37 a6 6 0 0 1 0 11" fill="none" stroke="#e4e4e4" stroke-width="3.5"/>
        <path d="M41 30 L77 30 L74 50 C70 55 48 55 45 50 Z" fill="#efefef"/>
        <ellipse cx="59" cy="30" rx="18" ry="6" fill="#f4f4f2"/>
        <ellipse cx="61" cy="31" rx="13" ry="4" fill="#1a120c"/>
        </svg>
<div class="r" style="left:1712.0px;top:816.7px;width:90.0px;height:28.3px;background:#d3f4cb;border-radius:14px"></div>
<div class="t" style="left:1723.5px;top:821.3px;font-size:21px;color:#10300f;font-weight:normal;">Posted</div>
<div class="t" style="left:1856.8px;top:821.3px;font-size:21px;color:#222;font-weight:normal;z-index:2">7,</div>
<div class="r" style="left:937.0px;top:895.2px;width:164.0px;height:87.2px;background:#f5f2fc;"></div>
<div class="r" style="left:535.0px;top:981.8px;width:1339.0px;height:1.0px;background:#e3e3e3;"></div>
<div class="t" style="left:555.8px;top:911.9px;font-size:19.5px;color:#666;font-weight:normal;">5</div>
<div class="t" style="left:648.8px;top:908.8px;font-size:21px;color:#333;font-weight:normal;">Magic of Pour Over</div>
<div class="r" style="left:947.0px;top:904.1px;width:118.5px;height:28.6px;background:#f3a8bc;border-radius:14.3px"></div>
<div class="t" style="left:958.4px;top:909.9px;font-size:20.3px;color:#4a1a2c;font-weight:normal;letter-spacing:0.3px">Instagram</div>
<div class="t" style="left:1111.8px;top:908.9px;font-size:21.3px;color:#333;font-weight:normal;text-decoration:underline;text-underline-offset:2px;text-decoration-thickness:1.5px">bigoakcoffeehouse.com</div>
<div class="r" style="left:1371.5px;top:902.4px;height:31.3px;background:#e9ecf7;border-radius:4px;overflow:hidden;width:167.5px"><div class="t" style="left:4.8px;top:5.1px;font-size:21px;color:#3b3f47;letter-spacing:0.25px">Pour over in cafe</div></div>
<svg class="r" style="left:1555.0px;top:902.7px;box-shadow:0 0 0 1.5px #fff, 0 0 0 2.5px #e2e2e2" width="114" height="70" viewBox="0 0 114 70">
        <defs><filter id="b5" x="-20%" y="-20%" width="140%" height="140%"><feGaussianBlur stdDeviation="1.6"/></filter></defs>
        <rect width="114" height="70" fill="#0b0b10"/>
        <g filter="url(#b5)">
          <rect x="35" y="0" width="14" height="42" fill="#e6dcd8"/>
          <rect x="47" y="0" width="28" height="32" fill="#1d4a6a"/>
          <ellipse cx="15" cy="17" rx="14" ry="8" fill="#e8e0dc"/>
          <rect x="5" y="27" width="40" height="16" fill="#1f3a2f"/>
          <rect x="76" y="4" width="26" height="48" fill="#d6dbde"/>
          <ellipse cx="20" cy="58" rx="5" ry="2.5" fill="#c8c8a8"/>
        </g>
        <path d="M76 10 C86 8 95 14 94 26 L80 28 Z" fill="#202020"/>
        <rect x="97" y="8" width="15" height="62" fill="#1a2530"/>
        <path d="M52 38 C52 26 72 26 72 38 Z" fill="#f0ece8"/>
        <rect x="52" y="40" width="20" height="24" fill="#6b5040"/>
        <rect x="76" y="44" width="18" height="20" fill="#7a6a50"/>
        <rect x="42" y="48" width="10" height="18" fill="#2a2a2a"/>
        </svg>
<div class="r" style="left:1712.0px;top:904.4px;width:90.0px;height:28.3px;background:#d3f4cb;border-radius:14px"></div>
<div class="t" style="left:1723.5px;top:908.9px;font-size:21px;color:#10300f;font-weight:normal;">Posted</div>
<div class="t" style="left:1856.8px;top:908.9px;font-size:21px;color:#222;font-weight:normal;z-index:2">7,</div>
<div class="r" style="left:937.0px;top:982.8px;width:164.0px;height:87.2px;background:#f5f2fc;"></div>
<div class="r" style="left:535.0px;top:1069.5px;width:1339.0px;height:1.0px;background:#e3e3e3;"></div>
<div class="t" style="left:555.8px;top:999.5px;font-size:19.5px;color:#666;font-weight:normal;">6</div>
<div class="t" style="left:648.8px;top:996.5px;font-size:21px;color:#333;font-weight:normal;">Cappuccino Day</div>
<div class="r" style="left:947.0px;top:991.7px;width:118.5px;height:28.6px;background:#f3a8bc;border-radius:14.3px"></div>
<div class="t" style="left:958.4px;top:997.5px;font-size:20.3px;color:#4a1a2c;font-weight:normal;letter-spacing:0.3px">Instagram</div>
<div class="t" style="left:1111.8px;top:996.6px;font-size:21.3px;color:#333;font-weight:normal;text-decoration:underline;text-underline-offset:2px;text-decoration-thickness:1.5px">bigoakcoffeehouse.com</div>
<div class="r" style="left:1371.5px;top:990.0px;height:31.3px;background:#e9ecf7;border-radius:4px;overflow:hidden;width:167.5px"><div class="t" style="left:4.8px;top:5.1px;font-size:21px;color:#3b3f47;letter-spacing:0.25px">Cappuccino on table</div></div>
<svg class="r" style="left:1555.0px;top:990.3px;box-shadow:0 0 0 1.5px #fff, 0 0 0 2.5px #e2e2e2" width="111" height="69" viewBox="0 0 111 69">
        <defs><linearGradient id="g6" x1="0" y1="0" x2="1" y2="0"><stop offset="0" stop-color="#7a4a2a"/><stop offset=".6" stop-color="#5a3820"/><stop offset="1" stop-color="#241a14"/></linearGradient>
        <linearGradient id="cup6" x1="0" x2="1"><stop offset="0" stop-color="#ecebe9"/><stop offset=".5" stop-color="#d8d6d4"/><stop offset="1" stop-color="#505050"/></linearGradient>
        <linearGradient id="sau6" x1="0" x2="1"><stop offset="0" stop-color="#d8d8d8"/><stop offset=".6" stop-color="#a8a8a8"/><stop offset="1" stop-color="#303030"/></linearGradient></defs>
        <rect width="111" height="69" fill="url(#g6)"/>
        <linearGradient id="t6" x1="0" y1="0" x2="0" y2="1"><stop offset="0" stop-color="#3e2a1c" stop-opacity=".7"/><stop offset="1" stop-color="#3e2a1c" stop-opacity="0"/></linearGradient>
        <filter id="b6" x="-50%" y="-50%" width="200%" height="200%"><feGaussianBlur stdDeviation="3"/></filter>
        <rect x="0" y="0" width="111" height="22" fill="url(#t6)"/>
        <rect x="86" y="38" width="30" height="35" fill="#121210" opacity=".85" filter="url(#b6)"/>
        <ellipse cx="62" cy="50" rx="37" ry="14" fill="url(#sau6)"/>
        <path d="M20 50 C40 52 60 53 80 54" stroke="#3a3a3a" stroke-width="2.2" fill="none"/>
        <path d="M33 24 L84 24 C84 42 76 50 58 50 C40 50 33 42 33 24 Z" fill="url(#cup6)"/>
        <circle cx="27" cy="31" r="5" fill="none" stroke="#ecebe9" stroke-width="3.5"/>
        <ellipse cx="58.5" cy="24" rx="25" ry="10" fill="#c8c4be"/>
        <ellipse cx="58.5" cy="24.5" rx="22" ry="8" fill="#2a1a12"/>
        <ellipse cx="60" cy="25.5" rx="19" ry="6" fill="#9a7a5c"/>
        <ellipse cx="60" cy="27" rx="8" ry="3" fill="#e8d8c4"/>
        </svg>
<div class="r" style="left:1712.0px;top:992.0px;width:64.0px;height:28.3px;background:#d1e2fa;border-radius:14px"></div>
<div class="t" style="left:1723.5px;top:996.6px;font-size:21px;color:#1d2c4c;font-weight:normal;">Idea</div>
<div class="r" style="left:1101.0px;top:807.0px;width:1.0px;height:263.0px;background:#ececec;"></div>
<div class="r" style="left:1362.0px;top:807.0px;width:1.0px;height:263.0px;background:#ececec;"></div>
<div class="r" style="left:1547.0px;top:807.0px;width:1.0px;height:263.0px;background:#ececec;"></div>
<div class="r" style="left:1701.0px;top:807.0px;width:1.0px;height:263.0px;background:#ececec;"></div>
<div class="r" style="left:1845.0px;top:807.0px;width:1.0px;height:263.0px;background:#ececec;"></div>
<svg class="r" style="left:554.0px;top:1088.0px;" width="16" height="16" viewBox="0 0 16 16"><path d="M8 1.5 v13 M1.5 8 h13" stroke="#444" stroke-width="2.8"/></svg>
<div class="r" style="left:936.0px;top:246.0px;width:1.0px;height:932.0px;background:#d2d2d2;"></div>
<div class="r" style="left:510.0px;top:1121.0px;width:1364.0px;height:5.0px;background:#ececec;"></div>
<div class="r" style="left:510.0px;top:1126.0px;width:1364.0px;height:52.0px;background:#f5f5f5;"></div>
<div class="r" style="left:510.0px;top:1120.0px;width:1364.0px;height:1.0px;background:#d2d2d2;"></div>
<div class="r" style="left:936.0px;top:1120.0px;width:1.0px;height:58.0px;background:#d2d2d2;"></div>
<div class="r" style="left:524.0px;top:1108.0px;width:45.5px;height:45.5px;background:#fff;border-radius:50%;box-shadow:0 0 2px rgba(0,0,0,.15);border:1px solid #e6e6e6;box-sizing:border-box"></div>
<svg class="r" style="left:538.0px;top:1124.0px;" width="16" height="16" viewBox="0 0 16 16"><path d="M8 1.5 v13 M1.5 8 h13" stroke="#444" stroke-width="2.8"/></svg>
<div class="t" style="left:581.4px;top:1136.5px;font-size:18.5px;color:#444;font-weight:normal;">6 records</div>
<div class="r" style="left:515.0px;top:1161.0px;width:439.0px;height:13.0px;background:#c4c4c4;border-radius:6.5px"></div>
<div class="r" style="left:1853.5px;top:299.0px;width:12.5px;height:638.0px;background:rgba(190,190,190,.85);border-radius:6px;z-index:1"></div>
</div></body></html>
